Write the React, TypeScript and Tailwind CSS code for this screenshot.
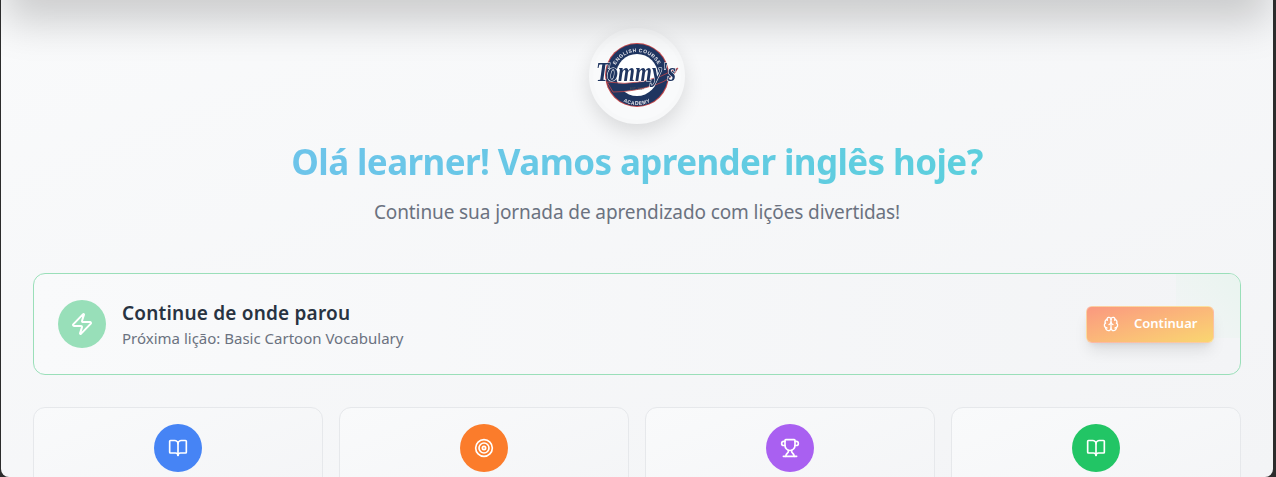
import { BookOpen, Brain, Target, Trophy, Zap } from "lucide-react";

const stats = [
  { icon: BookOpen, color: "bg-[#4684f5]" },
  { icon: Target, color: "bg-[#fb7c2b]" },
  { icon: Trophy, color: "bg-[#a960f1]" },
  { icon: BookOpen, color: "bg-[#22c565]" },
];

// Tommy's badge, kept as real svg text
const Logo = () => (
  <svg viewBox="0 0 88 88" className="h-[88px] w-[88px] shrink-0 blur-[0.4px]">
    <defs>
      <path id="arcTop" d="M20 44 A24 24 0 0 1 68 44" />
      <path id="arcBottom" d="M15 44 A29 29 0 0 0 73 44" />
    </defs>
    <circle cx="44" cy="43" r="32" fill="#c4474a" />
    <circle cx="44" cy="43" r="31" fill="#1f3560" />
    <circle cx="44" cy="43" r="21" fill="#ffffff" />
    <text fontSize="5" fontWeight="700" fill="#e8e8ee" fontFamily="Liberation Sans, sans-serif" letterSpacing="0.5">
      <textPath href="#arcTop" startOffset="50%" textAnchor="middle">
        ENGLISH COURSE
      </textPath>
    </text>
    <text fontSize="5" fontWeight="700" fill="#e8e8ee" fontFamily="Liberation Sans, sans-serif" letterSpacing="0.5">
      <textPath href="#arcBottom" startOffset="50%" textAnchor="middle">
        ACADEMY
      </textPath>
    </text>
    <path d="M14 50 Q50 56 85 36 Q80 47 62 53 Q40 60 20 60 Z" fill="#1f3560" stroke="#c4474a" strokeWidth="0.8" />
    <text x="3" y="49" fontSize="27" fontWeight="700" fontStyle="italic" fill="#1f3560" stroke="#ffffff" strokeWidth="1.2" paintOrder="stroke" fontFamily="Liberation Serif, serif" textLength="80" lengthAdjust="spacingAndGlyphs">
      Tommy's
    </text>
    <text x="44" y="58" textAnchor="middle" fontSize="3" fill="#555555" fontFamily="Liberation Sans, sans-serif">
      EST. 2017
    </text>
  </svg>
);

export default function App() {
  return (
    <div className="relative h-[477px] overflow-hidden bg-[#2c2c2c] pl-px pr-[3px] font-['Noto_Sans',sans-serif]">
      <div className="relative h-full overflow-hidden rounded-b-lg bg-gradient-to-br from-[#f9fafb] to-[#f3f4f6] px-8 pt-[28px]">
        {/* header sits above the fold, only its shadow shows */}
        <div className="absolute -top-[40px] left-[20px] right-[20px] h-[40px] shadow-[0_6px_40px_16px_rgba(0,0,0,0.18)]" />

        <div className="flex flex-col items-center">
          <div className="flex h-[96px] w-[96px] items-center justify-center rounded-full border-4 border-[#f7f8f9] bg-[#f9fafb] shadow-[0_8px_20px_rgba(0,0,0,0.12)]">
            <Logo />
          </div>
          <h1 className="mt-[14px] bg-gradient-to-r from-[#6dc4ea] to-[#5ccfdd] bg-clip-text text-[35px] font-bold leading-[48px] tracking-[-0.6px] text-transparent">
            Olá learner! Vamos aprender inglês hoje?
          </h1>
          <p className="mt-[12px] text-[19px] leading-[28px] tracking-[-0.1px] text-[#6b7280]">
            Continue sua jornada de aprendizado com lições divertidas!
          </p>
        </div>

        <div className="relative mt-[47px] flex h-[102px] items-center justify-between overflow-hidden rounded-xl border border-[#9adfb9] bg-gradient-to-r from-[#f9fafb] to-[#f3f4f6] px-6">
          <div className="absolute right-0 top-0 h-[64px] w-[64px] rounded-bl-[32px] bg-gradient-to-bl from-[#e9f4ef] to-transparent" />
          <div className="flex items-center gap-4">
            <div className="flex h-12 w-12 items-center justify-center rounded-full bg-[#98dfb9]">
              <Zap size={24} className="text-white" />
            </div>
            <div>
              <div className="text-[19px] font-semibold leading-[26px] tracking-[0.2px] text-[#283341]">Continue de onde parou</div>
              <div className="pt-px text-[15px] leading-[22px] text-[#6b7280]">Próxima lição: Basic Cartoon Vocabulary</div>
            </div>
          </div>
          <button className="relative mr-[2px] flex h-[37px] w-[128px] items-center gap-[15px] rounded-md border border-white/30 bg-gradient-to-br from-[#fa987f] to-[#f9d670] pl-4 text-[13px] font-semibold text-white shadow-lg">
            <Brain size={16} />
            Continuar
          </button>
        </div>

        <div className="mt-[32px] grid grid-cols-4 gap-4">
          {stats.map((s, i) => (
            <div key={i} className="flex h-[120px] justify-center rounded-xl border border-[#e6e8eb] bg-gradient-to-br from-[#f9fafb] to-[#f3f4f6] pt-4">
              <div className={`flex h-12 w-12 items-center justify-center rounded-full ${s.color}`}>
                <s.icon size={20} className="text-white" />
              </div>
            </div>
          ))}
        </div>
      </div>
    </div>
  );
}
